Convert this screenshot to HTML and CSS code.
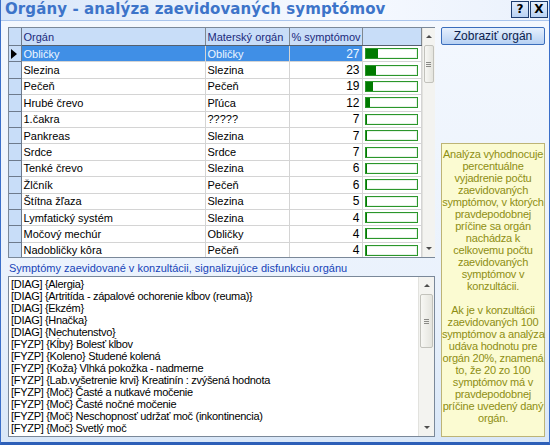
FILE: index.html
```html
<!DOCTYPE html>
<html lang="sk">
<head>
  <meta charset="UTF-8">
  <title>Orgány - analýza zaevidovaných symptómov</title>
  <link rel="stylesheet" href="styles.css">
</head>
<body>
  <div class="window">
    <div class="titlebar">
      <span class="title">Orgány - analýza zaevidovaných symptómov</span>
      <div class="title-buttons">
        <span class="tbtn">?</span>
        <span class="tbtn">X</span>
      </div>
    </div>

    <div class="main">
      <div class="left">
        <!-- tabuľka orgánov -->
        <div class="grid">
          <table class="grid-table">
            <colgroup>
              <col class="c-ind"><col class="c-org"><col class="c-mat"><col class="c-pct"><col class="c-bar">
            </colgroup>
            <thead>
              <tr>
                <th class="ind"></th>
                <th>Orgán</th>
                <th>Materský orgán</th>
                <th>% symptómov</th>
                <th></th>
              </tr>
            </thead>
            <tbody id="rows"></tbody>
          </table>
          <div class="vscroll">
            <div class="sb-btn"><span class="arr-up"></span></div>
            <div class="sb-thumb"><span class="grip"></span></div>
            <div class="sb-track"></div>
            <div class="sb-btn"><span class="arr-down"></span></div>
          </div>
        </div>

        <div class="list-label">Symptómy zaevidované v konzultácii, signalizujúce disfunkciu orgánu</div>

        <div class="listbox">
          <ul class="list-items">
            <li>[DIAG] {Alergia}</li>
            <li>[DIAG] {Artritída - zápalové ochorenie kĺbov (reuma)}</li>
            <li>[DIAG] {Ekzém}</li>
            <li>[DIAG] {Hnačka}</li>
            <li>[DIAG] {Nechutenstvo}</li>
            <li>[FYZP] {Kĺby} Bolesť kĺbov</li>
            <li>[FYZP] {Koleno} Studené kolená</li>
            <li>[FYZP] {Koža} Vlhká pokožka - nadmerne</li>
            <li>[FYZP] {Lab.vyšetrenie krvi} Kreatinín : zvýšená hodnota</li>
            <li>[FYZP] {Moč} Časté a nutkavé močenie</li>
            <li>[FYZP] {Moč} Časté nočné močenie</li>
            <li>[FYZP] {Moč} Neschopnosť udržať moč (inkontinencia)</li>
            <li>[FYZP] {Moč} Svetlý moč</li>
            <li>[FYZP] {Nechty} Lámavé nechty a zmeny ich farby</li>
          </ul>
          <div class="vscroll">
            <div class="sb-btn"><span class="arr-up"></span></div>
            <div class="sb-thumb big"><span class="grip"></span></div>
            <div class="sb-track"></div>
            <div class="sb-btn"><span class="arr-down"></span></div>
          </div>
        </div>
      </div>

      <div class="right">
        <button class="btn">Zobraziť orgán</button>
        <div class="info">
          <p>Analýza vyhodnocuje<br>percentuálne<br>vyjadrenie počtu<br>zaevidovaných<br>symptómov, v ktorých<br>pravdepodobnej<br>príčine sa orgán<br>nachádza k<br>celkovemu počtu<br>zaevidovaných<br>symptómov v<br>konzultácii.</p>
          <p>Ak je v konzultácii<br>zaevidovaných 100<br>symptómov a analýza<br>udáva hodnotu pre<br>orgán 20%, znamená<br>to, že 20 zo 100<br>symptómov má v<br>pravdepodobnej<br>príčine uvedený daný<br>orgán.</p>
        </div>
      </div>
    </div>
  </div>

  <script>
    // údaje tabuľky
    const data = [
      ['Obličky', 'Obličky', 27],
      ['Slezina', 'Slezina', 23],
      ['Pečeň', 'Pečeň', 19],
      ['Hrubé črevo', 'Pľúca', 12],
      ['1.čakra', '?????', 7],
      ['Pankreas', 'Slezina', 7],
      ['Srdce', 'Srdce', 7],
      ['Tenké črevo', 'Slezina', 6],
      ['Žlčník', 'Pečeň', 6],
      ['Štítna žľaza', 'Slezina', 5],
      ['Lymfatický systém', 'Slezina', 4],
      ['Močový mechúr', 'Obličky', 4],
      ['Nadobličky kôra', 'Pečeň', 4]
    ];

    const tbody = document.getElementById('rows');
    data.forEach((row, i) => {
      const tr = document.createElement('tr');
      if (i === 0) tr.className = 'selected';
      const fill = Math.max(1, Math.round(row[2] * 0.55 - 3));
      tr.innerHTML = `
        <td class="ind">${i === 0 ? '<span class="pointer"></span>' : ''}</td>
        <td>${row[0]}</td>
        <td>${row[1]}</td>
        <td class="num">${row[2]}</td>
        <td class="barcell"><div class="bar"><div class="fill" style="width:${fill}px"></div></div></td>
      `;
      tbody.appendChild(tr);
    });
  </script>
</body>
</html>
```

FILE: styles.css
```css
body {
  margin: 0;
  font-family: "Liberation Sans", Arial, sans-serif;
  font-size: 11px;
  color: #000;
}
.window {
  width: 550px;
  height: 445px;
  box-sizing: border-box;
  border-left: 1px solid #3b6fc9;
  border-right: 1px solid #3b6fc9;
  border-bottom: 3px solid #2d5fb8;
  background: linear-gradient(to bottom, #f4f8fe 0%, #e9f1fc 70%, #d9e7f8 100%);
  display: flex;
  flex-direction: column;
}
.titlebar {
  height: 21px;
  flex: none;
  display: flex;
  justify-content: space-between;
  align-items: flex-start;
  background: linear-gradient(to right, #d8e6f9, #f7faff 60%, #eaf1fc);
  border-bottom: 1px solid #a9c4ec;
  box-sizing: border-box;
}
.title {
  font-family: "DejaVu Sans", Verdana, sans-serif;
  font-weight: bold;
  font-size: 15px;
  line-height: 19px;
  color: #3d74c9;
  padding-left: 4px;
  letter-spacing: 0.1px;
}
.title-buttons {
  display: flex;
  gap: 1px;
  padding: 1px 1px 0 0;
}
.tbtn {
  width: 16px;
  height: 15px;
  border: 1px solid #1d3c6e;
  background: linear-gradient(#e4eefc, #b9d2f3);
  font-family: "DejaVu Sans", sans-serif;
  font-weight: bold;
  font-size: 12px;
  line-height: 15px;
  text-align: center;
  color: #000;
}

.main {
  flex: 1;
  min-height: 0;
  display: flex;
  gap: 6px;
  padding: 6px 3px 5px 7px;
}
.left {
  width: 427px;
  display: flex;
  flex-direction: column;
}
.right {
  width: 104px;
  display: flex;
  flex-direction: column;
  justify-content: space-between;
}

/* tabuľka */
.grid {
  height: 231px;
  flex: none;
  display: flex;
  border: 1px solid #7a8899;
  border-right: none;
  background: #fff;
  box-sizing: border-box;
  overflow: hidden;
}
.grid-table {
  width: 412px;
  table-layout: fixed;
  border-collapse: collapse;
  align-self: flex-start;
}
.c-ind { width: 12px; }
.c-org { width: 184px; }
.c-mat { width: 84px; }
.c-pct { width: 73px; }
.c-bar { width: 59px; }
.grid-table th {
  height: 17px;
  padding: 0 0 0 2px;
  text-align: left;
  font-weight: normal;
  color: #1b2a7c;
  background: #c8ddf8;
  border-right: 1px solid #808890;
  border-bottom: 1px solid #55606e;
}
.grid-table td {
  height: 15.4px;
  padding: 0 0 0 2px;
  white-space: nowrap;
  overflow: hidden;
  border-right: 1px solid #d4d4d4;
  border-bottom: 1px solid #d4d4d4;
}
.grid-table .ind {
  padding: 0;
  background: #c8ddf8;
  border-right: 1px solid #6d7a8c;
  border-bottom: 1px solid #6d7a8c;
}
.grid-table td.num {
  text-align: right;
  padding: 0 2px 0 0;
  font-size: 12px;
}
.selected td {
  background: #408fe6;
  color: #eef6ff;
}
.selected td.barcell { background: #fff; }
.pointer {
  display: block;
  width: 0;
  height: 0;
  margin-left: 2px;
  border-top: 5px solid transparent;
  border-bottom: 5px solid transparent;
  border-left: 6px solid #000;
}
.grid-table td.barcell { padding: 0 3px 0 2px; }
.bar {
  height: 11px;
  box-sizing: border-box;
  border: 1px solid #2b962b;
  box-shadow: inset 0 0 0 1px #e6f4e6;
  background: #fff;
}
.fill {
  height: 100%;
  background: #007a00;
}

/* posuvník */
.vscroll {
  width: 15px;
  display: flex;
  flex-direction: column;
  background: #f3f3f0;
  border-left: 1px solid #e2e2de;
}
.sb-btn {
  height: 17px;
  display: flex;
  align-items: center;
  justify-content: center;
}
.arr-up, .arr-down {
  width: 0;
  height: 0;
  border-left: 3px solid transparent;
  border-right: 3px solid transparent;
}
.arr-up { border-bottom: 3px solid #4d4d4d; }
.arr-down { border-top: 3px solid #4d4d4d; }
.sb-thumb {
  height: 36px;
  margin: 0 1px;
  border: 1px solid #c2c2bc;
  border-radius: 2px;
  background: linear-gradient(to right, #f7f7f4, #e4e4de);
  display: flex;
  align-items: center;
  justify-content: center;
}
.sb-thumb.big { height: 52px; }
.grip {
  width: 5px;
  height: 5px;
  border-top: 1px solid #8a8a86;
  border-bottom: 1px solid #8a8a86;
  box-sizing: border-box;
  background: linear-gradient(#8a8a86, #8a8a86) center / 100% 1px no-repeat;
}
.sb-track { flex: 1; }

.list-label {
  height: 18px;
  flex: none;
  line-height: 20px;
  color: #1744b8;
  padding-left: 1px;
  white-space: nowrap;
}

.listbox {
  flex: 1;
  min-height: 0;
  display: flex;
  border: 1px solid #7a8899;
  background: #fff;
  overflow: hidden;
}
.list-items {
  flex: 1;
  margin: 0;
  padding: 1px 0 0 2px;
  list-style: none;
  line-height: 12px;
  letter-spacing: -0.3px;
  overflow: hidden;
}
.list-items li { white-space: nowrap; }

/* pravý panel */
.btn {
  height: 18px;
  padding: 0;
  font-family: "Liberation Sans", Arial, sans-serif;
  font-size: 12px;
  color: #0c1d4d;
  border: 1px solid #3a6dbb;
  border-radius: 2px;
  background: linear-gradient(#e6f0fd, #b7d1f3);
}
.info {
  height: 294px;
  box-sizing: border-box;
  border: 1px solid #bdb476;
  background: #fbfbd2;
  color: #8e8e12;
  text-align: center;
  white-space: nowrap;
  letter-spacing: -0.2px;
  line-height: 12px;
  padding: 4px 0;
}
.info p { margin: 0 0 12px; }
```
